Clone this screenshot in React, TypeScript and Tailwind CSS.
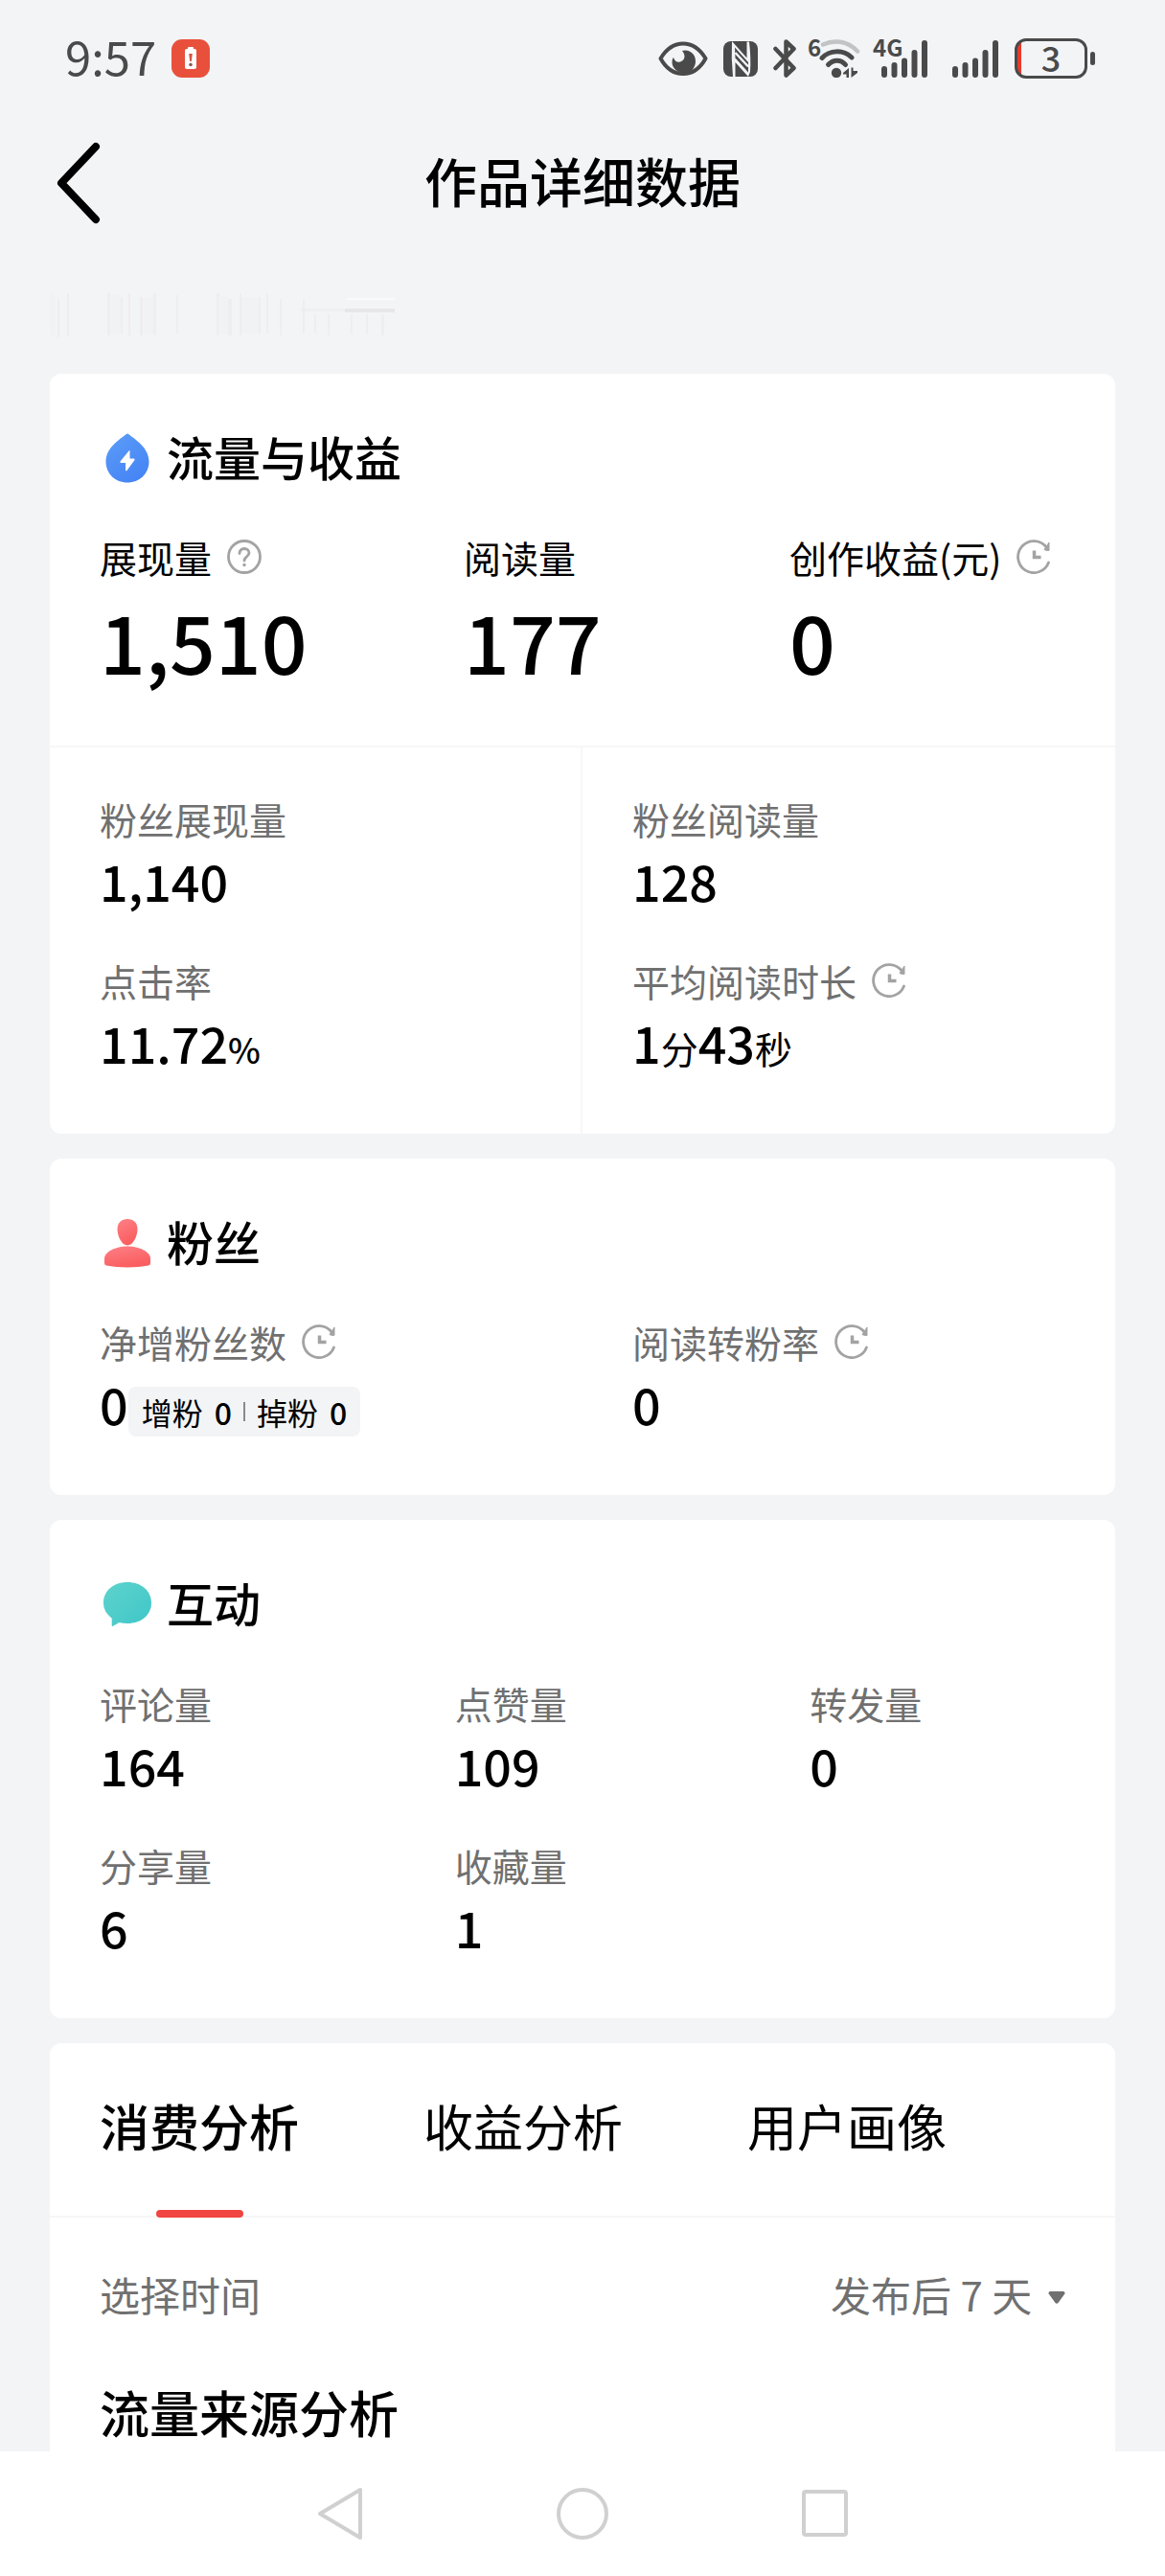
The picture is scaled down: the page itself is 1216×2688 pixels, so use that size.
import React, { ReactNode, useState } from 'react';
import clsx from 'clsx';

interface MetricProps {
  label: string;
  icon?: ReactNode;
  children: ReactNode;
}

/* ---------- status bar icons ---------- */

const LowBatteryBadge = () => (
  <svg className="w-10 h-10" viewBox="0 0 40 40">
    <rect width="40" height="40" rx="11" fill="#e8503c" />
    <rect x="17" y="8" width="6" height="3" rx="1" fill="#fff" />
    <rect x="14" y="10" width="12" height="21" rx="2" fill="#fff" />
    <path d="M18.2 15h3.6l-1 8h-1.6z" fill="#d9503f" />
    <circle cx="20" cy="26.5" r="1.8" fill="#8d5a56" />
  </svg>
);

const EyeIcon = () => (
  <svg className="w-[52px] h-10" viewBox="0 0 52 40">
    <path d="M2.5 20C8 11 16 4.500 26 4.500S44 11 49.500 20C44 30 36 36 26 36S8 30 2.500 20z" fill="none" stroke="#4a4a4a" strokeWidth="4" strokeLinejoin="round" />
    <path d="M25 12c6-2 14 2 14 11 0 7-5 12-12 12s-12.500-5-12.500-11c0-2 .3-4 1.500-5 1 4 4 5.500 7 4.500 5-1.500 6-7 2-11.500z" fill="#4a4a4a" />
  </svg>
);

const NfcIcon = () => (
  <svg className="w-9 h-10" viewBox="0 0 36 40">
    <rect y="2" width="36" height="37" rx="8" fill="#4a4a4a" />
    <path d="M9 2L24.500 19.500V2.500h2.500Q29 20 28 34l-2 5L12.500 24v15h-2.500Q8 20 9 2z" fill="#f3f4f6" />
    <path d="M12 8.500L26 24v10.500L12.500 19.500z" fill="#4a4a4a" />
    <path d="M12.500 14L26 28.500" stroke="#f3f4f6" strokeWidth="2.500" />
  </svg>
);

const BluetoothIcon = () => (
  <svg className="w-6 h-10" viewBox="0 0 24 40" fill="none" stroke="#4a4a4a" strokeWidth="4.500" strokeLinecap="round" strokeLinejoin="round">
    <path d="M2.500 10L21.500 30l-8 7.500v-35L21.500 10 2.500 30" />
  </svg>
);

const WifiIcon = () => (
  <svg className="w-11 h-10" viewBox="0 0 44 40" fill="none" strokeLinecap="round">
    <path d="M4 5.500C15 .5 29 1 40 12.500" stroke="#c2c3c5" strokeWidth="4.500" />
    <path d="M3 19.500C11 11 25 10.500 34 19" stroke="#4a4a4a" strokeWidth="5" />
    <path d="M9.500 26.500c5-5.500 13-6 18 0" stroke="#4a4a4a" strokeWidth="5" />
    <circle cx="18" cy="35" r="5.200" fill="#4a4a4a" />
    <path d="M31 30v10h-2.500v-3.500H25V35zM33.500 40V29.500l2 0v3.500H40v2z" fill="#4a4a4a" />
  </svg>
);

const SignalIcon = () => (
  <svg className="w-[50px] h-10" viewBox="0 0 50 40" stroke="#4a4a4a" strokeWidth="6" strokeLinecap="round">
    <path d="M4 31v6M14.500 27v10M25 22.500V37M35.500 14v23M46 4v33" />
  </svg>
);

/* ---------- page icons ---------- */

const QuestionIcon = () => (
  <svg className="w-9 h-9" viewBox="0 0 36 36" fill="none" stroke="#a3a3a3" strokeWidth="2.800" strokeLinecap="round">
    <circle cx="18" cy="18" r="16.500" />
    <path d="M13 14.500c0-3 2.200-5 5-5s5 2 5 4.500c0 3.500-5 4-5 8" />
    <circle cx="18" cy="26.500" r="1" fill="#a3a3a3" strokeWidth="1.500" />
  </svg>
);

const ClockIcon = () => (
  <svg className="w-9 h-9" viewBox="0 0 36 36" fill="none" stroke="#a3a3a3" strokeWidth="2.800">
    <path d="M33.500 24A16.500 16.500 0 1 1 31.500 8.500" strokeLinecap="round" />
    <path d="M34 3v8.500q-4 0-5-1z" fill="#a3a3a3" strokeWidth="1" />
    <path d="M18.500 11.500v7H25.500" strokeWidth="3.500" />
  </svg>
);

const DropIcon = () => (
  <svg className="w-[50px] h-[52px]" viewBox="0 0 50 52">
    <defs>
      <linearGradient id="drop" x1="0" y1="0" x2="0.6" y2="1">
        <stop offset="0" stopColor="#5c9df8" />
        <stop offset="1" stopColor="#4685f5" />
      </linearGradient>
    </defs>
    <path d="M23.500 1.200q1.500-1.200 3 0C33 6.500 47.500 15 47.500 29.500 47.500 42.500 37.500 51.500 25 51.500S2.500 42.500 2.500 29.500C2.500 15 17 6.500 23.500 1.200z" fill="url(#drop)" />
    <path d="M26.500 18.500L17.500 29.500q-.5 1.500 1 1.500h4.500v7.500q.5 1.500 1.500.5L32.500 28q.5-1.500-1-1.500H27.500v-7.500q0-1.500-1-.5z" fill="#fff" />
  </svg>
);

const FansIcon = () => (
  <svg className="w-[50px] h-[52px]" viewBox="0 0 50 52">
    <defs>
      <linearGradient id="fans" x1="0" y1="0" x2="0.4" y2="1">
        <stop offset="0" stopColor="#fd8086" />
        <stop offset="1" stopColor="#fa5e60" />
      </linearGradient>
    </defs>
    <path d="M25 1c6 0 10.500 4 10.500 10.500C35.500 19 31 28.500 25 28.500S14.500 19 14.500 11.500C14.500 5 19 1 25 1z" fill="url(#fans)" />
    <path d="M25 29.500c12 0 24 5.500 24 13v4.500q0 2-2 2.500C34 52 16 52 3 49.500q-2-.5-2-2.500v-4.500c0-7.500 12-13 24-13z" fill="url(#fans)" />
  </svg>
);

const BubbleIcon = () => (
  <svg className="w-[50px] h-[52px]" viewBox="0 0 50 52">
    <defs>
      <linearGradient id="bubble" x1="0" y1="0" x2="1" y2="1">
        <stop offset="0" stopColor="#5ed3cc" />
        <stop offset="1" stopColor="#3fc6c9" />
      </linearGradient>
    </defs>
    <path d="M25 3c14 0 25 8.500 25 21.500S39 46 25 46q-5 0-8.500-1L9.500 49q-.8.200-.8-.8V40.500C3.500 36.500 0 31.500 0 24.500 0 11.500 11 3 25 3z" fill="url(#bubble)" />
  </svg>
);

// Faded remains of the article title
const FadedTitle = () => (
  <svg className="w-[364px] h-12" viewBox="0 0 364 48" fill="#e9eaed" aria-hidden="true">
    <path d="M8 8h2v40h-2zM18 2h2v44h-2zM60 2h3v44h-3zM74 6h2v38h-2zM82 2h2v44h-2zM94 6h3v40h-3zM108 2h3v44h-3zM132 4h2v40h-2zM174 2h3v44h-3zM186 8h4v38h-4zM198 2h2v44h-2zM218 6h2v38h-2zM226 2h2v42h-2zM240 8h2v38h-2zM264 8h2v36h-2zM276 24h2v20h-2zM290 24h2v22h-2zM314 24h2v20h-2zM330 24h2v20h-2zM346 24h3v22h-3z" opacity="0.55" />
    <path d="M0 2h6v44h-6zM64 4h10v40h-10zM98 6h10v38h-10zM178 6h8v38h-8zM200 6h18v38h-18z" opacity="0.2" />
    <path d="M262 18h60v3h-60z" opacity="0.5" />
    <path d="M308 18h52v4h-52z" fill="#e3e4e7" opacity="0.8" />
    <path d="M310 7h50v2h-50z" fill="#fff" opacity="0.5" />
  </svg>
);

/* ---------- building blocks ---------- */

const StatusBar = () => (
  <div className="h-[122px] pl-[68px] pr-[73px] flex items-center justify-between text-[#4a4a4a]">
    <div className="flex items-center gap-4">
      <span className="pb-1.5 text-[49px] leading-[60px]">9:57</span>
      <LowBatteryBadge />
    </div>
    <div className="flex items-center">
      <EyeIcon />
      <span className="ml-4"><NfcIcon /></span>
      <span className="ml-4"><BluetoothIcon /></span>
      <span className="relative ml-6">
        <WifiIcon />
        <span className="absolute -left-3 -top-1 text-2xl leading-6 font-bold">6</span>
      </span>
      <span className="relative ml-5">
        <SignalIcon />
        <span className="absolute -left-2 -top-1 text-2xl leading-6 font-bold">4G</span>
      </span>
      <span className="ml-6"><SignalIcon /></span>
      <span className="ml-4 w-[76px] h-[42px] pb-1 flex items-center justify-center rounded-xl border-[3px] border-[#4a4a4a] bg-linear-to-r from-[#e83a2c] from-6% to-transparent to-6% text-4xl leading-8 font-medium">
        3
      </span>
      <span className="ml-[3px] w-[5px] h-3.5 rounded-full bg-[#4a4a4a]" />
    </div>
  </div>
);

const Card = ({ children, className }: { children: ReactNode; className?: string }) => (
  <section className={clsx('bg-white rounded-xl', className)}>{children}</section>
);

const CardTitle = ({ icon, children }: { icon: ReactNode; children: ReactNode }) => (
  <div className="px-14 pt-[50px] mb-[41px] flex items-center gap-4">
    <span className="pt-1">{icon}</span>
    <h2 className="text-[49px] leading-[72px] font-medium">{children}</h2>
  </div>
);

const Metric = ({ label, icon, children }: MetricProps) => (
  <div className="pl-[52px]">
    <div className="h-14 flex items-center gap-4 text-[39px] leading-[56px] text-[#707070] whitespace-nowrap">
      {label}
      {icon}
    </div>
    <div className="h-[74px] text-[52px] leading-[74px] font-medium whitespace-nowrap">{children}</div>
  </div>
);

const MainMetric = ({ label, icon, children }: MetricProps) => (
  <div>
    <div className="h-14 flex items-center gap-4 text-[39px] leading-[56px] whitespace-nowrap">
      {label}
      {icon}
    </div>
    <div className="text-[84px] leading-[118px] font-medium">{children}</div>
  </div>
);

const tabs = ['消费分析', '收益分析', '用户画像'];

export default function App() {
  const [activeTab, setActiveTab] = useState(tabs[0]);

  return (
    <div className="min-h-screen flex flex-col bg-[#f3f4f6] text-black font-['Noto_Sans_CJK_SC',sans-serif]">
      <StatusBar />

      <header className="h-[138px] px-14 grid grid-cols-[56px_1fr_56px] items-center">
        <button type="button" aria-label="返回">
          <svg className="w-14 h-[88px]" viewBox="0 0 56 88" fill="none" stroke="#000" strokeWidth="8" strokeLinecap="round" strokeLinejoin="round">
            <path d="M44 6L8 44l36 38" />
          </svg>
        </button>
        <h1 className="pb-2 text-center text-[55px] leading-[80px] font-medium">作品详细数据</h1>
      </header>

      <main className="flex-1 px-[52px] flex flex-col gap-[26px]">
        <div className="h-[104px] pt-11">
          <FadedTitle />
        </div>

        <Card>
          <CardTitle icon={<DropIcon />}>流量与收益</CardTitle>
          <div className="pl-[52px] pb-[51px] grid grid-cols-[380fr_340fr_340fr] border-b-2 border-[#f7f7f8]">
            <MainMetric label="展现量" icon={<QuestionIcon />}>1,510</MainMetric>
            <MainMetric label="阅读量">177</MainMetric>
            <MainMetric label="创作收益(元)" icon={<ClockIcon />}>0</MainMetric>
          </div>
          <div className="grid grid-cols-2">
            <div className="pt-[46px] pb-[58px] flex flex-col gap-[39px] border-r-2 border-[#f7f7f8]">
              <Metric label="粉丝展现量">1,140</Metric>
              <Metric label="点击率">
                11.72<span className="text-4xl">%</span>
              </Metric>
            </div>
            <div className="pt-[46px] pb-[58px] flex flex-col gap-[39px]">
              <Metric label="粉丝阅读量">128</Metric>
              <Metric label="平均阅读时长" icon={<ClockIcon />}>
                1<span className="text-[39px] font-normal">分</span>43<span className="text-[39px] font-normal">秒</span>
              </Metric>
            </div>
          </div>
        </Card>

        <Card className="pb-[58px]">
          <CardTitle icon={<FansIcon />}>粉丝</CardTitle>
          <div className="grid grid-cols-2">
            <Metric label="净增粉丝数" icon={<ClockIcon />}>
              <div className="flex items-center">
                0
                <div className="mt-4 h-[52px] px-3.5 flex items-center gap-3 rounded-lg bg-[#f3f4f6] text-[32px] leading-[52px]">
                  <span className="font-normal">增粉</span>
                  <span>0</span>
                  <span className="w-0.5 h-5 bg-[#8a8a8a]" />
                  <span className="font-normal">掉粉</span>
                  <span>0</span>
                </div>
              </div>
            </Metric>
            <Metric label="阅读转粉率" icon={<ClockIcon />}>0</Metric>
          </div>
        </Card>

        <Card className="pb-[58px]">
          <CardTitle icon={<BubbleIcon />}>互动</CardTitle>
          <div className="grid grid-cols-3 gap-y-[39px]">
            <Metric label="评论量">164</Metric>
            <Metric label="点赞量">109</Metric>
            <Metric label="转发量">0</Metric>
            <Metric label="分享量">6</Metric>
            <Metric label="收藏量">1</Metric>
          </div>
        </Card>

        <Card className="flex-1 rounded-b-none">
          <div role="tablist" className="px-[52px] flex gap-[130px] border-b-2 border-[#f7f7f8]">
            {tabs.map((tab) => (
              <button
                key={tab}
                type="button"
                role="tab"
                aria-selected={tab === activeTab}
                onClick={() => setActiveTab(tab)}
                className={clsx('relative h-[180px] pb-2 text-[52px] leading-[72px]', tab === activeTab && 'font-medium')}
              >
                {tab}
                {tab === activeTab && (
                  <span className="absolute -bottom-0.5 inset-x-0 mx-auto w-[91px] h-2 rounded-full bg-[#f04540]" />
                )}
              </button>
            ))}
          </div>
          <div className="px-[52px] pt-[50px] flex items-center justify-between text-[42px] leading-[60px] text-[#707070]">
            <label htmlFor="period">选择时间</label>
            <div className="flex items-center gap-4">
              <select id="period" className="appearance-none h-[60px] bg-transparent">
                <option>发布后 7 天</option>
              </select>
              <svg className="mt-2 w-[18px] h-3.5" viewBox="0 0 18 14" fill="#707070">
                <path d="M2 0h14q2.500 1 1 3L10.500 12q-1.500 1.500-3 0L1 3Q-.5 1 2 0z" />
              </svg>
            </div>
          </div>
          <h2 className="px-[52px] mt-[57px] text-[52px] leading-[72px] font-medium">流量来源分析</h2>
        </Card>
      </main>

      <nav className="h-[130px] px-[330px] flex items-center justify-between bg-white">
        <button type="button" aria-label="后退">
          <svg className="w-[50px] h-14" viewBox="0 0 50 56" fill="none" stroke="#d0d0d0" strokeWidth="4" strokeLinejoin="round">
            <path d="M46 3v50L4 28z" />
          </svg>
        </button>
        <button type="button" aria-label="主页">
          <svg className="w-14 h-14" viewBox="0 0 56 56" fill="none" stroke="#d0d0d0" strokeWidth="4">
            <circle cx="28" cy="28" r="25" />
          </svg>
        </button>
        <button type="button" aria-label="最近任务">
          <svg className="w-[50px] h-14" viewBox="0 0 50 56" fill="none" stroke="#d0d0d0" strokeWidth="4">
            <rect x="3" y="5" width="44" height="45" rx="2" />
          </svg>
        </button>
      </nav>
    </div>
  );
}
